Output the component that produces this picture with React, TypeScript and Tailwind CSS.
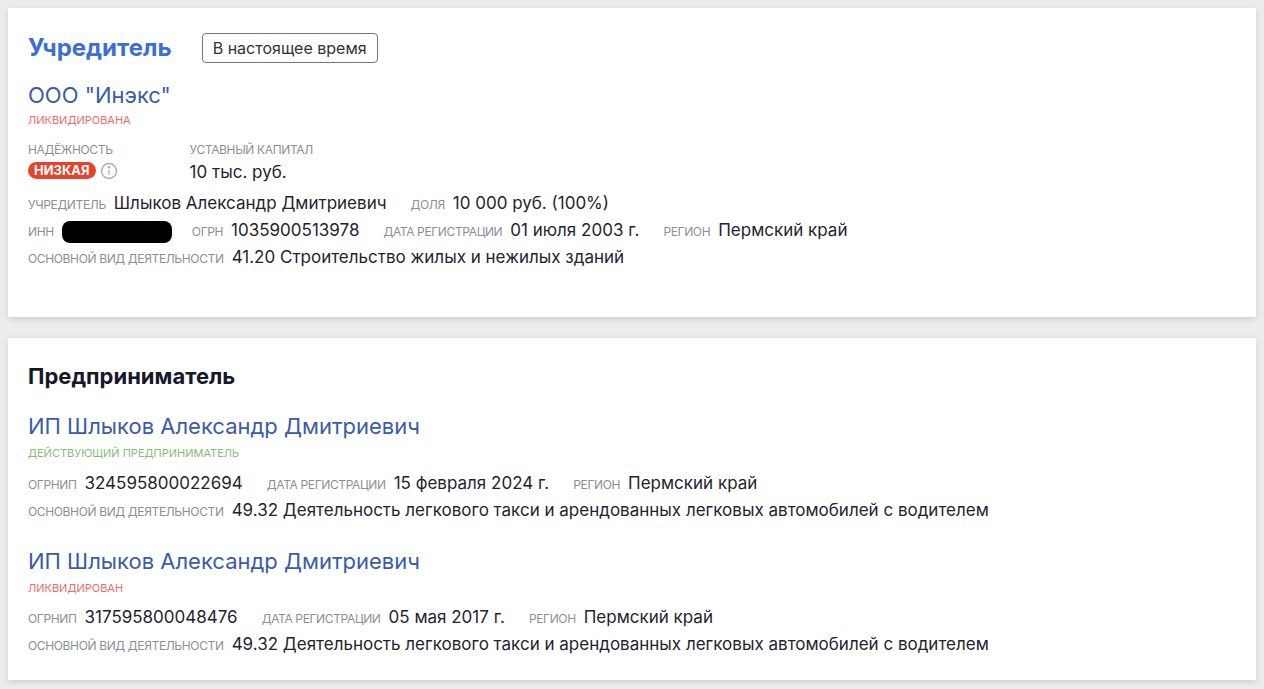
import React from 'react';

const L: React.FC<{ children: React.ReactNode; className?: string }> = ({ children, className = '' }) => (
  <span className={`text-[12px] uppercase text-[#8a8f99] tracking-[-0.03em] mr-2 ${className}`}>{children}</span>
);
const V: React.FC<{ children: React.ReactNode; className?: string }> = ({ children, className = '' }) => (
  <span className={`text-[17px] text-[#1f2430] ${className}`}>{children}</span>
);

const Row: React.FC<{ children: React.ReactNode }> = ({ children }) => (
  <div className="flex items-baseline h-[27px]">{children}</div>
);

const Okved = ({ text }: { text: string }) => (
  <Row>
    <L>Основной вид деятельности</L>
    <V>{text}</V>
  </Row>
);

const Ip = ({ status, statusColor, ogrnip, date }: { status: string; statusColor: string; ogrnip: string; date: string }) => (
  <div>
    <div className="text-[22px] text-[#3a5ca8] leading-[30px]">ИП Шлыков Александр Дмитриевич</div>
    <div className={`text-[11px] uppercase ${statusColor} mt-[4px] mb-[9px]`}>{status}</div>
    <Row>
      <L>ОГРНИП</L>
      <V className="mr-6">{ogrnip}</V>
      <L>Дата регистрации</L>
      <V className="mr-6">{date}</V>
      <L>Регион</L>
      <V>Пермский край</V>
    </Row>
    <Okved text="49.32 Деятельность легкового такси и арендованных легковых автомобилей с водителем" />
  </div>
);

export default function App() {
  return (
    <div className="min-h-[689px] bg-[#ececec] p-2 flex flex-col gap-[21px]" style={{ fontFamily: 'Inter, "Noto Sans", sans-serif' }}>
      <div className="bg-white shadow-[0_2px_6px_rgba(0,0,0,0.12)] h-[309px] px-5 pt-[22px]">
        <div className="flex items-center gap-[30px]">
          <h2 className="text-[24px] font-bold text-[#3b6fd4]">Учредитель</h2>
          <span className="border border-[#777] rounded-[4px] px-[10px] py-[2px] text-[16px] text-[#333]">В настоящее время</span>
        </div>
        <div className="text-[22px] text-[#3a5ca8] leading-[30px] mt-[14px]">ООО "Инэкс"</div>
        <div className="text-[11px] uppercase text-[#ee6b6b] mt-[2px]">Ликвидирована</div>
        <div className="flex gap-[72px] mt-[12px]">
          <div className="flex flex-col">
            <span className="text-[12px] uppercase text-[#8a8f99] tracking-[-0.03em]">Надёжность</span>
            <span className="flex items-center gap-1 mt-[3px]">
              <span className="bg-[#e8412c] text-white text-[13px] font-bold rounded-full px-[6px] leading-[17px]">НИЗКАЯ</span>
              <svg width="18" height="18" viewBox="0 0 18 18" fill="none" stroke="#aaa" strokeWidth="1.3">
                <circle cx="9" cy="9" r="7.5" />
                <line x1="9" y1="8" x2="9" y2="13" />
                <circle cx="9" cy="5.3" r="0.6" fill="#aaa" />
              </svg>
            </span>
          </div>
          <div className="flex flex-col">
            <span className="text-[12px] uppercase text-[#8a8f99] tracking-[-0.03em]">Уставный капитал</span>
            <V className="mt-[1px]">10 тыс. руб.</V>
          </div>
        </div>
        <div className="mt-[6px]">
          <Row>
            <L>Учредитель</L>
            <V className="mr-6">Шлыков Александр Дмитриевич</V>
            <L>Доля</L>
            <V>10 000 руб. (100%)</V>
          </Row>
          <Row>
            <L>ИНН</L>
            <span className="inline-block w-[110px] h-[22px] bg-black rounded-[8px] self-center mr-5" />
            <L>ОГРН</L>
            <V className="mr-6">1035900513978</V>
            <L>Дата регистрации</L>
            <V className="mr-6">01 июля 2003 г.</V>
            <L>Регион</L>
            <V>Пермский край</V>
          </Row>
          <Okved text="41.20 Строительство жилых и нежилых зданий" />
        </div>
      </div>
      <div className="bg-white shadow-[0_2px_6px_rgba(0,0,0,0.12)] h-[342px] px-5 pt-[22px]">
        <h2 className="text-[22px] font-bold text-[#16182a] leading-[32px]">Предприниматель</h2>
        <div className="mt-[19px] flex flex-col gap-[21px]">
          <Ip status="Действующий предприниматель" statusColor="text-[#86bd7a]" ogrnip="324595800022694" date="15 февраля 2024 г." />
          <Ip status="Ликвидирован" statusColor="text-[#ee6b6b]" ogrnip="317595800048476" date="05 мая 2017 г." />
        </div>
      </div>
    </div>
  );
}
